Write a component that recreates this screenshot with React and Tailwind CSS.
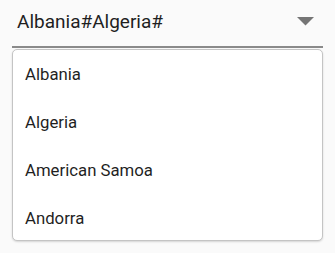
import React from "react";

export default function App() {
  const items = ["Albania", "Algeria", "American Samoa", "Andorra"];
  return (
    <div className="w-[335px] h-[253px] bg-[#fafafa] overflow-hidden" style={{ fontFamily: "Roboto, sans-serif" }}>
      <div className="pl-[12px] pr-[12px]">
        <div className="h-[48px] border-b-2 border-[#8a8a8a] flex items-center justify-between pl-[5px] pr-[9px] pb-[3px]">
          <span className="text-[19px] text-[#1f1f1f] leading-none">Albania#Algeria#</span>
          <svg width="17" height="9" viewBox="0 0 17 9">
            <polygon points="0,0 17,0 8.5,8.5" fill="#757575" />
          </svg>
        </div>
        <div className="mt-[1px] h-[192px] overflow-hidden bg-white border border-[#c4c4c4] rounded-[5px] shadow-[0_1px_2px_rgba(0,0,0,0.15)]">
          {items.map((t) => (
            <div key={t} className="h-[48px] shrink-0 flex items-center pl-[12px] pt-[2px] text-[16.75px] text-[#1f1f1f]">
              {t}
            </div>
          ))}
        </div>
      </div>
    </div>
  );
}
